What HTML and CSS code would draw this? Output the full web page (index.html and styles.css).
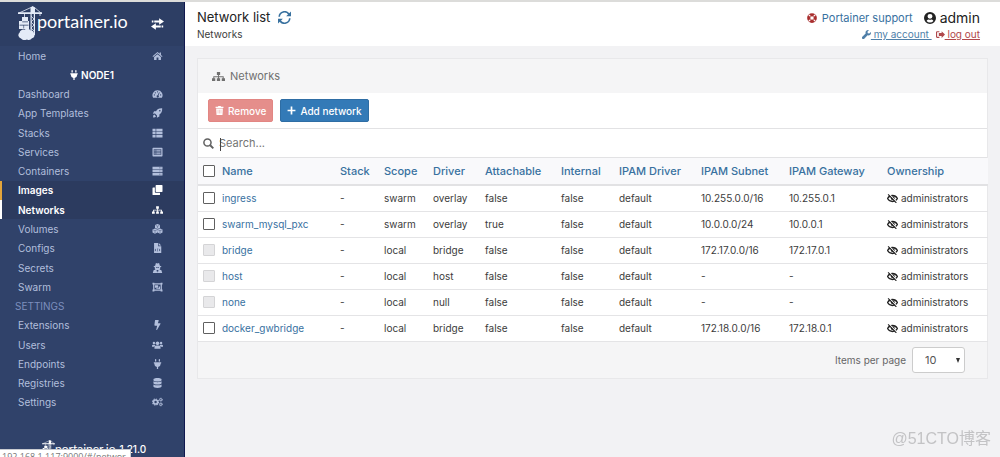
FILE: index.html
```html
<!DOCTYPE html>
<html lang="en">
<head>
<meta charset="utf-8">
<title>Portainer</title>
<link rel="stylesheet" href="styles.css">
</head>
<body>
<svg class="sprite" aria-hidden="true">
  <symbol id="crane" viewBox="0 0 24 34">
    <path d="M12.500 7h1.200v22h-1.200zM15.800 7H17v22h-1.200zM0 6.300h24v1.600H0zM12.500 1.500 14.500 0 17 1.500V7h-4.500z"/>
    <path d="M13 1.500 1 7M16.500 1.500 23 7M6.500 7v5M22 7v3M13 10l3 3-3 3 3 3-3 3 3 3" fill="none" stroke="currentColor" stroke-width=".8"/>
    <path fill-rule="evenodd" d="M4 11h6v4h1v8H1v-8h3zM4.200 15.500v.8H10v-.8zM1.500 18.800v.7h9v-.7zM5.500 19.500v3h.6v-3z"/>
    <path d="M3 32.500a3.300 3.300 0 0 1-1.500-5.700 3.800 3.800 0 0 1 5-3 4 4 0 0 1 6 .8 3.300 3.300 0 0 1 3.500 3 3 3 0 0 1-2 4.600 4 4 0 0 1-5 1.200 5 5 0 0 1-6-.9z"/>
  </symbol>
  <symbol id="swap" viewBox="0 0 16 16">
    <path d="M1 3.700h2v2.600H1zM4 3.700h6V1l6 4-6 4V6.300H4zM13 9.700h2v2.600h-2zM12 9.700H6V7l-6 4 6 4v-2.700h6z"/>
  </symbol>
  <symbol id="home" viewBox="0 0 16 16">
    <path d="m8 1.500 3.500 3V2.500h2v3.700L16 8.500l-1 1.200-7-6-7 6-1-1.200z"/><path d="m8 5 5.500 4.700V14.500h-4V10.500h-3v4h-4V9.700z"/>
  </symbol>
  <symbol id="plug" viewBox="0 0 384 512">
    <path d="M320 32a32 32 0 0 0-64 0v96h64zm48 128H16a16 16 0 0 0-16 16v32a16 16 0 0 0 16 16h16v32a160 160 0 0 0 128 156.800V512h64v-99.200A160 160 0 0 0 352 256v-32h16a16 16 0 0 0 16-16v-32a16 16 0 0 0-16-16zM128 32a32 32 0 0 0-64 0v96h64z"/>
  </symbol>
  <symbol id="gauge" viewBox="0 0 16 16">
    <path fill-rule="evenodd" d="M8 2a8 8 0 0 0-7 12h14A8 8 0 0 0 8 2zM3 8.500a1 1 0 1 1 0 2 1 1 0 0 1 0-2zM4.500 5a1 1 0 1 1 0 2 1 1 0 0 1 0-2zM8 3.500a1 1 0 1 1 0 2 1 1 0 0 1 0-2zM10.500 5l1 .4-2 5A1.700 1.700 0 1 1 8.300 10zM13 8.500a1 1 0 1 1 0 2 1 1 0 0 1 0-2z"/>
  </symbol>
  <symbol id="rocket" viewBox="0 0 16 16">
    <path fill-rule="evenodd" d="M15.500.5C10 .2 7.500 2 5.700 5H2.500L.5 9l3.500-.2L7.200 12 7 15.500l4-2v-3.200C14 8.500 15.800 6 15.500.5zM11.700 3a1.300 1.300 0 1 1 0 2.600 1.300 1.300 0 0 1 0-2.600z"/><path d="M3 10.500c-2 .5-2 2.500-2 4.500 2 0 4 0 4.500-2z"/>
  </symbol>
  <symbol id="thlist" viewBox="0 0 16 16">
    <path d="M0 1h5v4H0zM6 1h10v4H6zM0 6h5v4H0zM6 6h10v4H6zM0 11h5v4H0zM6 11h10v4H6z"/>
  </symbol>
  <symbol id="listalt" viewBox="0 0 16 16">
    <path fill-rule="evenodd" d="M1 1h14a1 1 0 0 1 1 1v12a1 1 0 0 1-1 1H1a1 1 0 0 1-1-1V2a1 1 0 0 1 1-1zM2 3.500v9h12v-9z"/><path d="M3 4.500h2V6H3zM6 4.500h7V6H6zM3 7.200h2v1.500H3zM6 7.200h7v1.500H6zM3 10h2v1.500H3zM6 10h7v1.500H6z"/>
  </symbol>
  <symbol id="server" viewBox="0 0 16 16">
    <path fill-rule="evenodd" d="M0 1h16v4H0zM11 2.500v1h1v-1zM13 2.500v1h1v-1zM0 6h16v4H0zM11 7.500v1h1v-1zM13 7.500v1h1v-1zM0 11h16v4H0zM11 12.500v1h1v-1zM13 12.500v1h1v-1z"/>
  </symbol>
  <symbol id="clone" viewBox="0 0 16 16">
    <path d="M6 0h9a1 1 0 0 1 1 1v9a1 1 0 0 1-1 1H6a1 1 0 0 1-1-1V1a1 1 0 0 1 1-1z"/><path d="M1 4h2.800v7.200a1 1 0 0 0 1 1H12V15a1 1 0 0 1-1 1H1a1 1 0 0 1-1-1V5a1 1 0 0 1 1-1z"/>
  </symbol>
  <symbol id="sitemap" viewBox="0 0 20 16">
    <path d="M7.500 1h5v4.500h-5zM0 10.500h5V15H0zM7.500 10.500h5V15h-5zM15 10.500h5V15h-5zM9.300 5.500h1.400v5H9.300zM2 7.500h16v3h-1.500V9h-13v1.500H2z"/>
  </symbol>
  <symbol id="cubes" viewBox="0 0 16 16">
    <path d="m8 0 4 1.600v4.600L8 8 4 6.200V1.600zM3.900 7l4 1.700v4.700l-4 2.100-3.900-2.100V8.700zM12.100 7 16 8.700v4.700l-3.900 2.100-4-2.100V8.700z"/>
    <path d="m5 2.300 3 1.200 3-1.200M8 3.700v3M1 9.500l3 1.200 3-1.200M4 11v3.500M9 9.500l3 1.200 3-1.200M12 11v3.500" fill="none" stroke="#30426a" stroke-width=".7"/>
  </symbol>
  <symbol id="file" viewBox="0 0 16 16">
    <path fill-rule="evenodd" d="M2.500 0H9v5h5v11H2.500zM5 9l-1.500 2L5 13l.7-.6L4.800 11l.9-1.400zM11 9l-.7.600.9 1.400-.9 1.400.7.600 1.500-2zM8.300 8.500l-1.300 5h.8l1.300-5z"/><path d="M10 0v4h4z"/>
  </symbol>
  <symbol id="secret" viewBox="0 0 16 16">
    <path fill-rule="evenodd" d="M5.500 0 8 .8 10.500 0l1.300 4.500 2.200.7v1H12.500c0 2-.2 3-1.200 4l3 1.300L15.500 16H.5l1.200-4.500 3-1.300c-1-1-1.200-2-1.200-4H2v-1l2.200-.7zM5.500 6.500l.5 1.200h1.300l.7-1 .7 1H10l.5-1.200zM6.500 11l.8 4L8 12.500 8.700 15l.8-4z"/>
  </symbol>
  <symbol id="ungroup" viewBox="0 0 16 16">
    <path fill-rule="evenodd" d="M0 1h3v1h10V1h3v3h-1v8h1v3h-3v-1H3v1H0v-3h1V4H0zM3 4v8h10V4zM4 5h5v4H4zM10 7h2v4H6v-1h4z"/>
  </symbol>
  <symbol id="bolt" viewBox="0 0 320 512">
    <path d="M296 160H180.600l42.600-129.800C227.200 15 215.700 0 200 0H56C44 0 33.800 8.900 32.200 20.800l-32 240C-1.700 275.200 9.500 288 24 288h118.700L96.600 482.500c-3.600 15.200 8 29.500 23.300 29.500 8.400 0 16.400-4.400 20.800-12l176-304c9.300-15.900-2.200-36-20.700-36z"/>
  </symbol>
  <symbol id="users" viewBox="0 0 20 16">
    <circle cx="3.500" cy="4.500" r="2.200"/><circle cx="16.500" cy="4.500" r="2.200"/><circle cx="10" cy="5" r="3.300"/>
    <path d="M0 11V9.500a2 2 0 0 1 2-2h3a6 6 0 0 0 1.200 1.400A5 5 0 0 0 4.200 11zM20 11V9.500a2 2 0 0 0-2-2h-3a6 6 0 0 1-1.200 1.400 5 5 0 0 1 2 2.100zM4.500 15v-2.500A3.500 3.500 0 0 1 8 9h4a3.500 3.500 0 0 1 3.500 3.500V15z"/>
  </symbol>
  <symbol id="database" viewBox="0 0 16 16">
    <path d="M1.500 2.300C1.500 1 4.500 0 8 0s6.500 1 6.500 2.300v1.200c0 1.200-3 2-6.500 2s-6.500-.8-6.500-2zM1.500 5.200c1.500 1 4.200 1.400 6.500 1.400s5-.4 6.500-1.400v3c0 1.300-3 2.300-6.500 2.300s-6.500-1-6.500-2.300zM1.500 10.200c1.500 1 4.200 1.400 6.500 1.400s5-.4 6.500-1.400v3.500c0 1.300-3 2.300-6.500 2.300s-6.500-1-6.500-2.300z"/>
  </symbol>
  <symbol id="cogs" viewBox="0 0 20 16">
    <circle cx="6.500" cy="8" r="3.700" fill="none" stroke="currentColor" stroke-width="3"/>
    <circle cx="6.500" cy="8" r="5.500" fill="none" stroke="currentColor" stroke-width="2" stroke-dasharray="2.300 2"/>
    <circle cx="16" cy="3.800" r="2" fill="none" stroke="currentColor" stroke-width="1.700"/>
    <circle cx="16" cy="3.800" r="3" fill="none" stroke="currentColor" stroke-width="1.200" stroke-dasharray="1.600 1.500"/>
    <circle cx="16" cy="12.200" r="2" fill="none" stroke="currentColor" stroke-width="1.700"/>
    <circle cx="16" cy="12.200" r="3" fill="none" stroke="currentColor" stroke-width="1.200" stroke-dasharray="1.600 1.500"/>
  </symbol>
  <symbol id="refresh" viewBox="0 0 16 16">
    <path d="M1.500 7a6.500 6.500 0 0 1 12-3M14.500 9a6.500 6.500 0 0 1-12 3" fill="none" stroke="currentColor" stroke-width="2"/><path d="M16 .5v6h-6zM0 15.500v-6h6z"/>
  </symbol>
  <symbol id="lifering" viewBox="0 0 16 16">
    <circle cx="8" cy="8" r="5.300" fill="none" stroke="currentColor" stroke-width="5"/>
    <path d="m2.500 2.500 3 3M13.500 2.500l-3 3M2.500 13.500l3-3M13.500 13.500l-3-3" stroke="#fff" stroke-width="1.800"/>
  </symbol>
  <symbol id="user" viewBox="0 0 16 16">
    <path fill-rule="evenodd" d="M8 0a8 8 0 1 1 0 16A8 8 0 0 1 8 0zM8 2.500a3.300 3.300 0 1 0 0 6.600 3.300 3.300 0 0 0 0-6.600zM3.500 12a6 6 0 0 0 9 0c-.6-1.300-1.500-2-2.700-2a5 5 0 0 1-3.600 0c-1.200 0-2.100.7-2.700 2z"/>
  </symbol>
  <symbol id="wrench" viewBox="0 0 16 16">
    <path d="M15.700 3.700 13 6.300l-2.700-.6L9.700 3 12.300.3a4.600 4.600 0 0 0-5.800 5.800L.6 12a2 2 0 0 0 3.400 3.400l5.900-5.900a4.600 4.600 0 0 0 5.800-5.800z"/>
  </symbol>
  <symbol id="logout" viewBox="0 0 16 16">
    <path d="M6 2H2a2 2 0 0 0-2 2v8a2 2 0 0 0 2 2h4v-2H2V4h4zM10 2 16 8l-6 6v-3.500H5v-5h5z"/>
  </symbol>
  <symbol id="trash" viewBox="0 0 16 16">
    <path fill-rule="evenodd" d="M1 1.500h4L6 0h4l1 1.500h4v2H1zM2 4.500h12L13.300 16H2.700zM5 6.500v7h.7v-7zM7.700 6.500v7h.7v-7zM10.300 6.500v7h.7v-7z"/>
  </symbol>
  <symbol id="plus" viewBox="0 0 16 16"><path d="M6.500 1h3v5.500H15v3H9.500V15h-3V9.500H1v-3h5.500z"/></symbol>
  <symbol id="search" viewBox="0 0 16 16">
    <circle cx="6.500" cy="6.500" r="5.200" fill="none" stroke="currentColor" stroke-width="2.200"/><path d="m10.500 10.500 4.500 4.500" stroke="currentColor" stroke-width="2.800"/>
  </symbol>
  <symbol id="eyeslash" viewBox="0 0 20 16">
    <path d="M1 8c2-3.500 5-5.500 9-5.500s7 2 9 5.500c-2 3.500-5 5.500-9 5.500S3 11.500 1 8z" fill="none" stroke="currentColor" stroke-width="2.400"/><circle cx="10.500" cy="7.500" r="3.400"/><path d="m4 0 14 15" stroke="#fff" stroke-width="2"/><path d="m2 .5 15 15.500" stroke="currentColor" stroke-width="2"/>
  </symbol>
</svg>

<div class="app">
  <aside class="sidebar">
    <div class="brand">
      <svg class="brand-mark"><use href="#crane"/></svg>
      <span class="brand-name">portainer.io</span>
      <button class="toggle" type="button" aria-label="Toggle sidebar"><svg class="toggle-icon"><use href="#swap"/></svg></button>
    </div>
    <nav class="menu">
      <a class="item" href="#home">Home<svg class="icon"><use href="#home"/></svg></a>
      <div class="endpoint"><svg class="icon-small"><use href="#plug"/></svg>NODE1</div>
      <a class="item" href="#dashboard">Dashboard<svg class="icon"><use href="#gauge"/></svg></a>
      <a class="item" href="#templates">App Templates<svg class="icon"><use href="#rocket"/></svg></a>
      <a class="item" href="#stacks">Stacks<svg class="icon"><use href="#thlist"/></svg></a>
      <a class="item" href="#services">Services<svg class="icon"><use href="#listalt"/></svg></a>
      <a class="item" href="#containers">Containers<svg class="icon"><use href="#server"/></svg></a>
      <a class="item hovered" href="#images">Images<svg class="icon"><use href="#clone"/></svg></a>
      <a class="item active" href="#networks">Networks<svg class="icon"><use href="#sitemap"/></svg></a>
      <a class="item" href="#volumes">Volumes<svg class="icon"><use href="#cubes"/></svg></a>
      <a class="item" href="#configs">Configs<svg class="icon"><use href="#file"/></svg></a>
      <a class="item" href="#secrets">Secrets<svg class="icon"><use href="#secret"/></svg></a>
      <a class="item" href="#swarm">Swarm<svg class="icon"><use href="#ungroup"/></svg></a>
      <div class="section">SETTINGS</div>
      <a class="item" href="#extensions">Extensions<svg class="icon"><use href="#bolt"/></svg></a>
      <a class="item" href="#users">Users<svg class="icon"><use href="#users"/></svg></a>
      <a class="item" href="#endpoints">Endpoints<svg class="icon"><use href="#plug"/></svg></a>
      <a class="item" href="#registries">Registries<svg class="icon"><use href="#database"/></svg></a>
      <a class="item" href="#settings">Settings<svg class="icon"><use href="#cogs"/></svg></a>
    </nav>
    <div class="version">
      <svg class="version-mark"><use href="#crane"/></svg><span class="version-name">portainer.io</span><span class="version-number">1.21.0</span>
    </div>
  </aside>

  <main class="content">
    <header class="topbar">
      <div>
        <h1 class="title">Network list <a class="link" href="#refresh" aria-label="Refresh"><svg class="refresh"><use href="#refresh"/></svg></a></h1>
        <div class="crumb">Networks</div>
      </div>
      <div class="account">
        <div class="account-main">
          <svg class="ring"><use href="#lifering"/></svg><a class="link support" href="#support">Portainer support</a>
          <svg class="avatar"><use href="#user"/></svg><span class="admin">admin</span>
        </div>
        <div class="account-links">
          <a class="mini" href="#account"><svg class="icon-mini"><use href="#wrench"/></svg><u>&nbsp;my account&nbsp;</u></a>
          <a class="mini danger" href="#logout"><svg class="icon-mini"><use href="#logout"/></svg><u>&nbsp;log out</u></a>
        </div>
      </div>
    </header>

    <section class="widget">
      <h2 class="widget-title"><svg class="widget-icon"><use href="#sitemap"/></svg>Networks</h2>
      <div class="actions">
        <button class="btn remove" type="button" disabled><svg class="btn-icon"><use href="#trash"/></svg>Remove</button>
        <button class="btn add" type="button"><svg class="btn-icon"><use href="#plus"/></svg>Add network</button>
      </div>
      <label class="searchbar"><svg class="search-icon"><use href="#search"/></svg><span class="field"><input class="search" type="text" placeholder="Search..." aria-label="Search"><span class="caret"></span></span></label>
      <table class="grid">
        <colgroup><col class="c-name"><col class="c-stack"><col class="c-scope"><col class="c-driver"><col class="c-attach"><col class="c-internal"><col class="c-ipam"><col class="c-subnet"><col class="c-gateway"><col class="c-owner"></colgroup>
        <thead>
          <tr><th><span class="pick"><input class="check" type="checkbox" aria-label="Select all"><a class="link" href="#name">Name</a></span></th><th><a class="link" href="#stack">Stack</a></th><th><a class="link" href="#scope">Scope</a></th><th><a class="link" href="#driver">Driver</a></th><th><a class="link" href="#attachable">Attachable</a></th><th><a class="link" href="#internal">Internal</a></th><th><a class="link" href="#ipam">IPAM Driver</a></th><th><a class="link" href="#subnet">IPAM Subnet</a></th><th><a class="link" href="#gateway">IPAM Gateway</a></th><th><a class="link" href="#ownership">Ownership</a></th></tr>
        </thead>
        <tbody>
          <tr><td><span class="pick"><input class="check" type="checkbox" aria-label="Select ingress"><a class="link" href="#ingress">ingress</a></span></td><td>-</td><td>swarm</td><td>overlay</td><td>false</td><td>false</td><td>default</td><td>10.255.0.0/16</td><td>10.255.0.1</td><td><svg class="eye"><use href="#eyeslash"/></svg>administrators</td></tr>
          <tr><td><span class="pick"><input class="check" type="checkbox" aria-label="Select swarm_mysql_pxc"><a class="link" href="#pxc">swarm_mysql_pxc</a></span></td><td>-</td><td>swarm</td><td>overlay</td><td>true</td><td>false</td><td>default</td><td>10.0.0.0/24</td><td>10.0.0.1</td><td><svg class="eye"><use href="#eyeslash"/></svg>administrators</td></tr>
          <tr><td><span class="pick"><input class="check" type="checkbox" disabled aria-label="Select bridge"><a class="link" href="#bridge">bridge</a></span></td><td>-</td><td>local</td><td>bridge</td><td>false</td><td>false</td><td>default</td><td>172.17.0.0/16</td><td>172.17.0.1</td><td><svg class="eye"><use href="#eyeslash"/></svg>administrators</td></tr>
          <tr><td><span class="pick"><input class="check" type="checkbox" disabled aria-label="Select host"><a class="link" href="#host">host</a></span></td><td>-</td><td>local</td><td>host</td><td>false</td><td>false</td><td>default</td><td>-</td><td>-</td><td><svg class="eye"><use href="#eyeslash"/></svg>administrators</td></tr>
          <tr><td><span class="pick"><input class="check" type="checkbox" disabled aria-label="Select none"><a class="link" href="#none">none</a></span></td><td>-</td><td>local</td><td>null</td><td>false</td><td>false</td><td>default</td><td>-</td><td>-</td><td><svg class="eye"><use href="#eyeslash"/></svg>administrators</td></tr>
          <tr><td><span class="pick"><input class="check" type="checkbox" aria-label="Select docker_gwbridge"><a class="link" href="#gwbridge">docker_gwbridge</a></span></td><td>-</td><td>local</td><td>bridge</td><td>false</td><td>false</td><td>default</td><td>172.18.0.0/16</td><td>172.18.0.1</td><td><svg class="eye"><use href="#eyeslash"/></svg>administrators</td></tr>
        </tbody>
      </table>
      <div class="pager">
        <label for="per-page">Items per page</label>
        <span class="select-wrap"><select class="per-page" id="per-page"><option>10</option><option>25</option><option>50</option></select><span class="arrow"></span></span>
      </div>
    </section>
  </main>
</div>
<div class="status">192.168.1.117:9000/#/networ</div>
<div class="watermark">@51CTO博客</div>
</body>
</html>
```
FILE: styles.css
```css
* { box-sizing: border-box; }
body {
  margin: 0;
  background: #f2f2f4;
  color: #3c3c3c;
  font: 10px/14px Inter, "Open Sans", sans-serif;
  overflow: hidden;
}
svg { fill: currentColor; flex: none; }
.sprite { position: absolute; width: 0; height: 0; }
.app { display: flex; height: 100vh; border-top: 2px solid #dcdcda; }

.sidebar {
  display: flex;
  flex-direction: column;
  width: 185px;
  flex: none;
  background: #30426a;
  border-right: 1px solid #10184f;
  color: #b2bfdc;
}
.brand {
  display: flex;
  align-items: flex-start;
  height: 44px;
  padding: 4px 20px 0 18px;
  background: #2d3e64;
  color: #fff;
}
.brand-mark { width: 24px; height: 34px; color: #e4ebf7; margin-right: -5px; }
.brand-name { font: 18px/30px Lato, sans-serif; }
.toggle { margin: 11px 0 0 auto; padding: 0; border: 0; background: none; color: #fff; }
.toggle-icon { display: block; width: 13px; height: 14px; }
.menu { display: grid; grid-auto-rows: 1fr; flex: 1; }
.item {
  display: flex;
  align-items: center;
  justify-content: space-between;
  padding: 0 21px 0 16px;
  border-left: 2px solid transparent;
  color: inherit;
  font-size: 10px;
  text-decoration: none;
}
.icon { width: 11px; height: 10px; }
.icon-small { width: 8px; height: 10px; }
.hovered, .active { background: #2c3b5f; color: #fff; font-weight: 600; }
.hovered { border-left-color: #e4a53b; }
.active { border-left-color: #fff; }
.endpoint { display: flex; align-items: center; justify-content: center; gap: 3px; color: #fff; font-weight: 600; }
.section { display: flex; align-items: center; padding-left: 15px; color: #7d8fbd; }
.version { display: flex; height: 45px; padding: 28px 0 0 42px; color: #fff; }
.version-mark { width: 13px; height: 18px; }
.version-name { font: 12px/18px Lato, sans-serif; }
.version-number { margin-left: 4px; font-weight: 500; line-height: 18px; }

.content { flex: 1; min-width: 0; }
.topbar {
  display: flex;
  justify-content: space-between;
  height: 44px;
  padding: 6px 20px 0 12px;
  background: #fff;
}
.title { display: flex; align-items: center; gap: 8px; margin: 0; color: #222; font-size: 13px; font-weight: 400; line-height: 19px; }
.link { color: #38719f; text-decoration: none; }
.refresh { display: block; width: 13px; height: 13px; }
.account-main { display: flex; align-items: center; justify-content: flex-end; height: 19px; }
.ring { width: 10px; height: 10px; margin-right: 5px; color: #a92f2f; }
.support { font-size: 11px; }
.avatar { width: 12px; height: 12px; margin: 0 4px 0 11px; color: #222; }
.admin { color: #222; font-size: 14px; }
.account-links { display: flex; justify-content: flex-end; gap: 4px; }
.mini { display: flex; align-items: center; color: #4f7fa8; text-decoration: none; }
.danger { color: #b0484b; }
.icon-mini { width: 9px; height: 9px; }

.widget { margin: 12px 12px 0; border: 1px solid #e8e8ea; background: #fff; }
.widget-title {
  display: flex;
  align-items: center;
  gap: 5px;
  height: 34px;
  margin: 0;
  padding-left: 14px;
  background: #f5f5f6;
  color: #707070;
  font-size: 11px;
  font-weight: 400;
}
.widget-icon { width: 13px; height: 11px; }
.actions { display: flex; gap: 7px; padding: 6px 10px; border-bottom: 1px solid #e2e2e4; }
.btn {
  display: flex;
  align-items: center;
  gap: 4px;
  height: 23px;
  padding: 0 6px;
  border: 1px solid;
  border-radius: 2px;
  color: #fff;
  font: 500 10px/14px Inter, sans-serif;
}
.btn-icon { width: 9px; height: 9px; }
.remove { background: #e58e8b; border-color: #e28683; }
.add { background: #337ab7; border-color: #2e6da4; }
.searchbar { display: flex; align-items: center; gap: 5px; height: 29px; padding-left: 5px; border-bottom: 1px solid #e2e2e4; color: #606060; }
.search-icon { width: 11px; height: 11px; }
.field { position: relative; flex: 1; }
.search { width: 100%; padding: 0; border: 0; outline: 0; background: none; color: inherit; font: 11px/16px Inter, sans-serif; }
.search::placeholder { color: #757575; }
.caret { position: absolute; top: 3px; left: 1px; width: 1px; height: 13px; background: #444; }

.grid { width: 100%; border-collapse: collapse; table-layout: fixed; }
.grid th, .grid td { height: 26px; padding: 0 0 0 5px; text-align: left; white-space: nowrap; }
.grid th { height: 27px; background: #f9f9fb; border-bottom: 2px solid #e2e2e4; font-size: 11px; font-weight: 500; }
.grid td { border-bottom: 1px solid #e4e4e6; }
.c-name { width: 137px; }
.c-stack { width: 44px; }
.c-scope { width: 49px; }
.c-driver { width: 52px; }
.c-attach { width: 76px; }
.c-internal { width: 58px; }
.c-ipam { width: 82px; }
.c-subnet { width: 88px; }
.c-gateway { width: 98px; }
.c-owner { width: 106px; }
.pick { display: flex; align-items: center; gap: 7px; }
.check { appearance: none; flex: none; width: 12px; height: 12px; margin: 0; border: 1px solid #606060; border-radius: 1px; background: #fff; }
.check:disabled { border-color: #d4d4d6; background: #e9e9eb; }
.eye { width: 11px; height: 9px; margin-right: 3px; color: #222; vertical-align: -1px; }
.pager { display: flex; align-items: center; justify-content: flex-end; gap: 6px; height: 36px; padding-right: 22px; background: #f5f5f6; color: #666; }
.select-wrap { position: relative; }
.per-page { display: block; appearance: none; width: 53px; height: 26px; padding: 0 12px; border: 1px solid #ccc; border-radius: 3px; background: #fff; color: #555; font: 11px/16px Inter, sans-serif; }
.arrow { position: absolute; top: 11px; right: 5px; border: 2px solid transparent; border-top: 5px solid #333; border-bottom: 0; pointer-events: none; }

.status {
  position: fixed;
  left: 0;
  bottom: 0;
  width: 131px;
  height: 8px;
  padding: 0 0 0 2px;
  overflow: hidden;
  border: solid #c9ccd2;
  border-width: 1px 1px 0 0;
  background: #fff;
  color: #777;
  font: 9px/14px "Open Sans", sans-serif;
  white-space: nowrap;
}
.watermark { position: fixed; right: 9px; bottom: 8px; color: #c3c3c5; font: 16px/20px "Liberation Sans", "Noto Sans CJK SC", sans-serif; }
```
